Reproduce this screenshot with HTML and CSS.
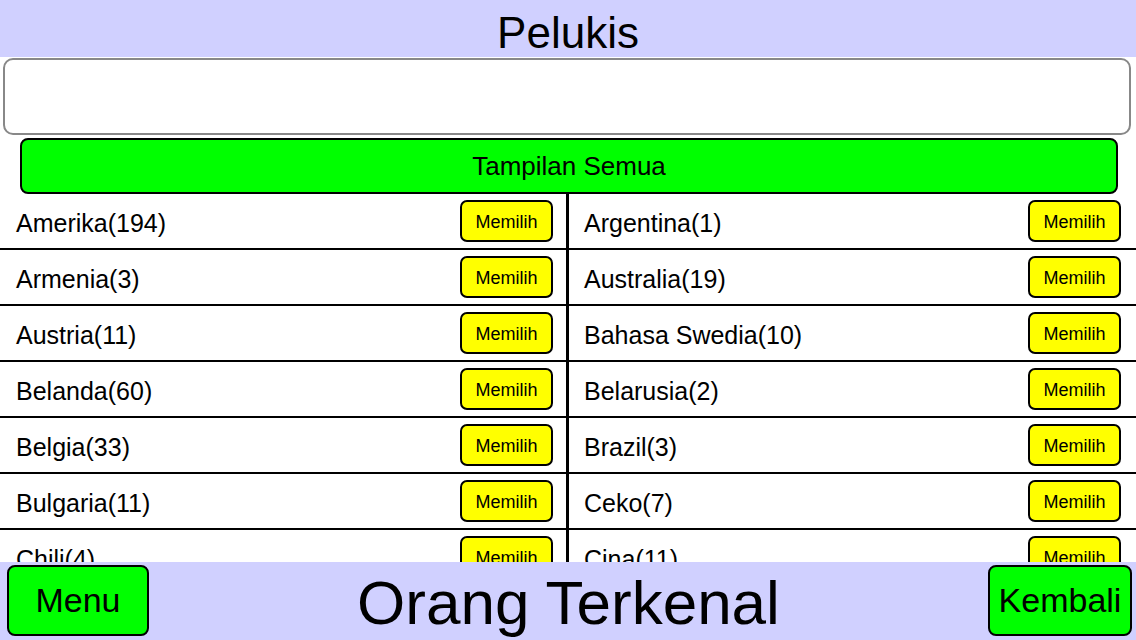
FILE: index.html
```html
<!DOCTYPE html>
<html lang="id">
<head>
<meta charset="utf-8">
<title>Pelukis</title>
<link rel="stylesheet" href="styles.css">
</head>
<body>
<div class="app">
  <header class="topbar"><h1 class="title">Pelukis</h1></header>
  <div class="search"></div>
  <div class="showall-wrap"><button class="showall">Tampilan Semua</button></div>
  <div class="list">
    <div class="cell left"><span class="name">Amerika(194)</span><button class="pick">Memilih</button></div>
    <div class="cell right"><span class="name">Argentina(1)</span><button class="pick">Memilih</button></div>
    <div class="cell left"><span class="name">Armenia(3)</span><button class="pick">Memilih</button></div>
    <div class="cell right"><span class="name">Australia(19)</span><button class="pick">Memilih</button></div>
    <div class="cell left"><span class="name">Austria(11)</span><button class="pick">Memilih</button></div>
    <div class="cell right"><span class="name">Bahasa Swedia(10)</span><button class="pick">Memilih</button></div>
    <div class="cell left"><span class="name">Belanda(60)</span><button class="pick">Memilih</button></div>
    <div class="cell right"><span class="name">Belarusia(2)</span><button class="pick">Memilih</button></div>
    <div class="cell left"><span class="name">Belgia(33)</span><button class="pick">Memilih</button></div>
    <div class="cell right"><span class="name">Brazil(3)</span><button class="pick">Memilih</button></div>
    <div class="cell left"><span class="name">Bulgaria(11)</span><button class="pick">Memilih</button></div>
    <div class="cell right"><span class="name">Ceko(7)</span><button class="pick">Memilih</button></div>
    <div class="cell left"><span class="name">Chili(4)</span><button class="pick">Memilih</button></div>
    <div class="cell right"><span class="name">Cina(11)</span><button class="pick">Memilih</button></div>
  </div>
  <footer class="bottombar">
    <button class="navbtn menu">Menu</button>
    <div class="screen-title">Orang Terkenal</div>
    <button class="navbtn back">Kembali</button>
  </footer>
</div>
</body>
</html>
```

FILE: styles.css
```css
* { box-sizing: border-box; }
html, body { margin: 0; padding: 0; }
body {
  width: 1136px;
  height: 640px;
  overflow: hidden;
  background: #ffffff;
  font-family: "Liberation Sans", Arial, sans-serif;
  color: #000;
}
.app {
  display: flex;
  flex-direction: column;
  height: 640px;
}
.topbar {
  height: 57px;
  flex: none;
  background: #d0d0ff;
  display: flex;
  align-items: center;
  justify-content: center;
}
.title {
  margin: 0;
  font-weight: normal;
  font-size: 44px;
  line-height: 1;
  padding-top: 8px;
}
.search {
  flex: none;
  margin: 1px 5px 0 3px;
  height: 77px;
  border: 2px solid #888888;
  border-radius: 10px;
  background: #fff;
}
.showall-wrap {
  flex: none;
  padding: 3px 18px 0 20px;
}
.showall {
  display: block;
  width: 100%;
  height: 56px;
  background: #00ff00;
  border: 2px solid #000;
  border-radius: 8px;
  font-family: inherit;
  font-size: 26px;
  color: #000;
  padding: 0;
}
.list {
  flex: 1;
  min-height: 0;
  overflow: hidden;
  display: grid;
  grid-template-columns: 569px 1fr;
  grid-auto-rows: 56px;
}
.cell {
  display: flex;
  align-items: center;
  justify-content: space-between;
  border-bottom: 2px solid #000;
  height: 56px;
}
.cell.left {
  padding: 0 13px 0 16px;
  border-right: 3px solid #000;
}
.cell.right {
  padding: 0 15px 0 15px;
}
.name {
  font-size: 25px;
  padding-top: 4px;
}
.pick {
  width: 93px;
  height: 42px;
  background: #ffff00;
  border: 2px solid #000;
  border-radius: 7px;
  font-family: inherit;
  font-size: 18px;
  color: #000;
  padding: 3px 0 0 0;
}
.bottombar {
  flex: none;
  height: 78px;
  background: #d0d0ff;
  display: flex;
  align-items: center;
  padding: 0 4px 1px 7px;
  position: relative;
  z-index: 1;
}
.navbtn {
  height: 71px;
  background: #00ff00;
  border: 2px solid #000;
  border-radius: 8px;
  font-family: inherit;
  font-size: 34px;
  color: #000;
  padding: 0;
}
.menu { width: 142px; }
.back { width: 144px; }
.screen-title {
  flex: 1;
  text-align: center;
  font-size: 62px;
  line-height: 1;
  padding-top: 4px;
  padding-left: 0;
}
```
